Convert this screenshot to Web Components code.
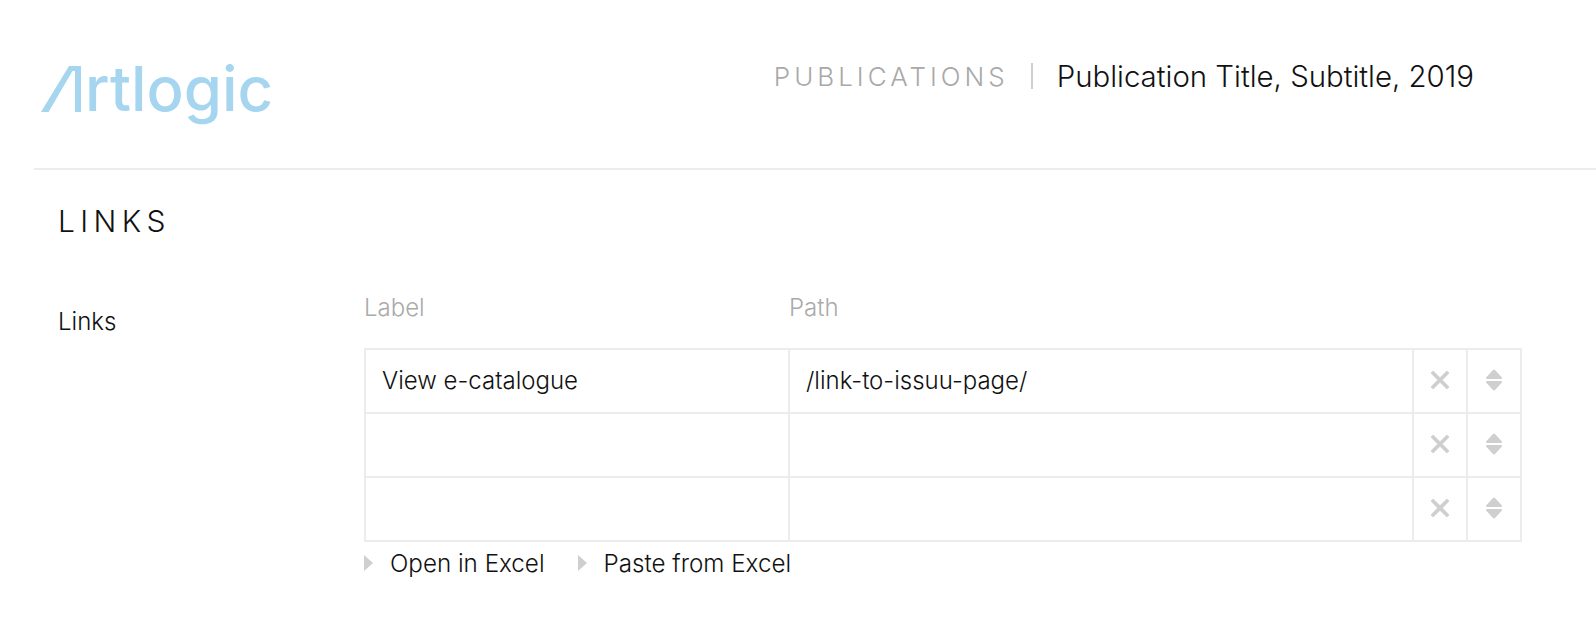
<!DOCTYPE html>
<html>
<head>
<meta charset="utf-8">
<title>Links</title>
<style>
    html, body { margin: 0; background: #fff; }
    body { font-family: Inter, Lato, "Liberation Sans", sans-serif; color: #111; }
</style>
</head>
<body>
<app-header section="PUBLICATIONS" title-text="Publication Title, Subtitle, 2019"></app-header>
<form-section heading="LINKS" label="Links">
    <links-table>
        <link-row label="View e-catalogue" path="/link-to-issuu-page/"></link-row>
        <link-row></link-row>
        <link-row></link-row>
    </links-table>
</form-section>

<script>
class ArtlogicLogo extends HTMLElement {
    constructor() {
        super();
        this.attachShadow({ mode: 'open' });
        this.shadowRoot.innerHTML = `
            <style>
                :host { display: flex; color: #a6d5f0; height: 62px; }
                svg { width: 40px; height: 46px; flex: none; }
                span { font: 500 61.7px/46px Inter, sans-serif; letter-spacing: 0; margin-left: 4px; }
            </style>
            <svg viewBox="0 0 40 46" aria-hidden="true">
                <path fill="currentColor" d="M0 46 L28 0 H40 V46 H34 V5 H31.5 L7.5 46 Z"/>
            </svg>
            <span>rtlogic</span>
        `;
    }
}

class AppHeader extends HTMLElement {
    constructor() {
        super();
        this.attachShadow({ mode: 'open' });
    }

    connectedCallback() {
        this.shadowRoot.innerHTML = `
            <style>
                :host { display: block; margin-left: 34px; height: 168px; border-bottom: 2px solid #ececec; }
                .bar { display: flex; height: 100%; padding-left: 7px; }
                artlogic-logo { margin-top: 66px; }
                .crumbs { display: flex; align-items: center; height: 30px; margin: 61px 0 0 auto; padding-right: 122px; }
                .section { font-size: 26px; font-weight: 300; letter-spacing: 4px; color: #a9a9a9; }
                .sep { width: 2px; height: 26px; background: #cfcfcf; margin: 0 24px 0 22px; }
                .title { font-size: 29.4px; font-weight: 300; color: #111; }
            </style>
            <div class="bar">
                <artlogic-logo></artlogic-logo>
                <div class="crumbs">
                    <span class="section">${this.getAttribute('section')}</span>
                    <span class="sep"></span>
                    <span class="title">${this.getAttribute('title-text')}</span>
                </div>
            </div>
        `;
    }
}

class FormSection extends HTMLElement {
    constructor() {
        super();
        this.attachShadow({ mode: 'open' });
    }

    connectedCallback() {
        this.shadowRoot.innerHTML = `
            <style>
                :host { display: block; padding: 30px 0 0 58px; }
                h2 { margin: 0; font-size: 30px; font-weight: 300; line-height: 42px; letter-spacing: 5.4px; color: #111; }
                .field { display: grid; grid-template-columns: 306px 1158px; margin-top: 51px; }
                .label { font-size: 24px; font-weight: 300; line-height: 30px; margin-top: 14px; color: #111; }
            </style>
            <h2>${this.getAttribute('heading')}</h2>
            <div class="field">
                <div class="label">${this.getAttribute('label')}</div>
                <slot></slot>
            </div>
        `;
    }
}

class LinksTable extends HTMLElement {
    constructor() {
        super();
        this.attachShadow({ mode: 'open' });
        this.shadowRoot.innerHTML = `
            <style>
                :host { display: block; }
                .head { display: grid; grid-template-columns: 425px 1fr; font-size: 24px; font-weight: 300; line-height: 30px; color: #aaa; height: 55px; }
                .rows { border-top: 2px solid #ececec; border-left: 2px solid #ececec; }
                .actions { display: flex; gap: 33px; margin-top: 7px; }
            </style>
            <div class="head"><span>Label</span><span>Path</span></div>
            <div class="rows"><slot></slot></div>
            <div class="actions">
                <excel-action>Open in Excel</excel-action>
                <excel-action>Paste from Excel</excel-action>
            </div>
        `;
    }
}

class LinkRow extends HTMLElement {
    constructor() {
        super();
        this.attachShadow({ mode: 'open' });
    }

    connectedCallback() {
        this.shadowRoot.innerHTML = `
            <style>
                :host { display: grid; grid-template-columns: 424px 624px 54px 54px; height: 64px; }
                div { display: flex; align-items: center; justify-content: center; padding-bottom: 3px; border-right: 2px solid #ececec; border-bottom: 2px solid #ececec; box-sizing: border-box; min-width: 0; }
                .text { justify-content: flex-start; padding: 0 0 2px 16px; font-size: 24px; font-weight: 300; color: #111; }
                svg { display: block; }
            </style>
            <div class="text">${this.getAttribute('label') || ''}</div>
            <div class="text">${this.getAttribute('path') || ''}</div>
            <div>
                <svg width="18" height="18" viewBox="0 0 18 18"><path d="M2 2 L16 16 M16 2 L2 16" stroke="#cfcfcf" stroke-width="3.8" stroke-linecap="round"/></svg>
            </div>
            <div>
                <svg width="16" height="22" viewBox="0 0 16 22"><path fill="#cfcfcf" stroke="#cfcfcf" stroke-width="2" stroke-linejoin="round" d="M8 1.5 L15 9 H1 Z M1 13 H15 L8 20.5 Z"/></svg>
            </div>
        `;
    }
}

class ExcelAction extends HTMLElement {
    constructor() {
        super();
        this.attachShadow({ mode: 'open' });
        this.shadowRoot.innerHTML = `
            <style>
                :host { display: inline-flex; align-items: center; gap: 17px; font-size: 24.2px; font-weight: 300; line-height: 30px; color: #111; }
                svg { flex: none; margin-top: -2px; }
            </style>
            <svg width="9" height="16" viewBox="0 0 9 16"><path fill="#cfcfcf" d="M0 0 L9 8 L0 16 Z"/></svg>
            <slot></slot>
        `;
    }
}

customElements.define('artlogic-logo', ArtlogicLogo);
customElements.define('app-header', AppHeader);
customElements.define('form-section', FormSection);
customElements.define('links-table', LinksTable);
customElements.define('link-row', LinkRow);
customElements.define('excel-action', ExcelAction);
</script>
</body>
</html>
